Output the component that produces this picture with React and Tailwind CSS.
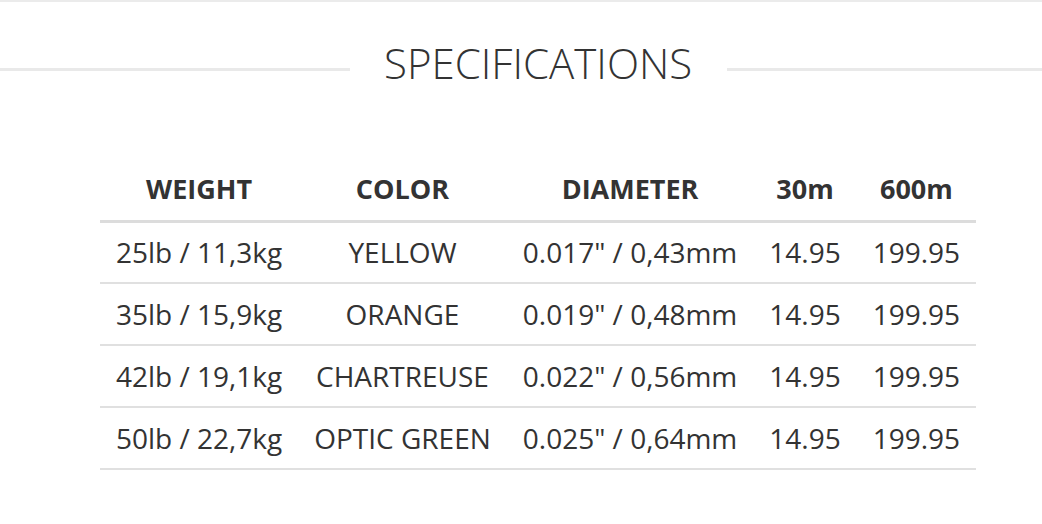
const specs = [
  { weight: '25lb / 11,3kg', color: 'YELLOW', diameter: '0.017" / 0,43mm', short: '14.95', long: '199.95' },
  { weight: '35lb / 15,9kg', color: 'ORANGE', diameter: '0.019" / 0,48mm', short: '14.95', long: '199.95' },
  { weight: '42lb / 19,1kg', color: 'CHARTREUSE', diameter: '0.022" / 0,56mm', short: '14.95', long: '199.95' },
  { weight: '50lb / 22,7kg', color: 'OPTIC GREEN', diameter: '0.025" / 0,64mm', short: '14.95', long: '199.95' },
];

const headers = ['WEIGHT', 'COLOR', 'DIAMETER', '30m', '600m'];

const App = () => {
  return (
    <div
      className="w-[1042px] h-[524px] bg-white text-[#333] border-t-2 border-[#ebebeb] overflow-hidden"
      style={{ fontFamily: '"Open Sans", "Liberation Sans", sans-serif' }}
    >
      <div className="flex items-start pt-[40px]">
        <div className="w-[350px] h-[3px] mt-[26px] bg-[#e9e9e9]" />
        <h2 className="ml-[34px] mr-[35px] text-[42px] leading-[42px] font-light tracking-normal">
          SPECIFICATIONS
        </h2>
        <div className="flex-1 h-[3px] mt-[26px] bg-[#e9e9e9]" />
      </div>

      <div className="flex justify-center pl-[34px] mt-[74px]">
        <table className="border-collapse">
          <thead>
            <tr className="border-b-[3px] border-[#dcdcdc]">
              {headers.map((h) => (
                <th key={h} className="h-[63px] px-4 text-center align-middle text-[27px] font-bold">
                  {h}
                </th>
              ))}
            </tr>
          </thead>
          <tbody>
            {specs.map((row) => (
              <tr key={row.weight} className="border-b-2 border-[#e0e0e0]">
                <td className="h-[62px] px-4 text-center align-middle text-[28px] whitespace-nowrap">{row.weight}</td>
                <td className="h-[62px] px-4 text-center align-middle text-[28px] whitespace-nowrap">{row.color}</td>
                <td className="h-[62px] px-4 text-center align-middle text-[28px] whitespace-nowrap">{row.diameter}</td>
                <td className="h-[62px] px-4 text-center align-middle text-[28px] whitespace-nowrap">{row.short}</td>
                <td className="h-[62px] px-4 text-center align-middle text-[28px] whitespace-nowrap">{row.long}</td>
              </tr>
            ))}
          </tbody>
        </table>
      </div>
    </div>
  );
};

export default App;
